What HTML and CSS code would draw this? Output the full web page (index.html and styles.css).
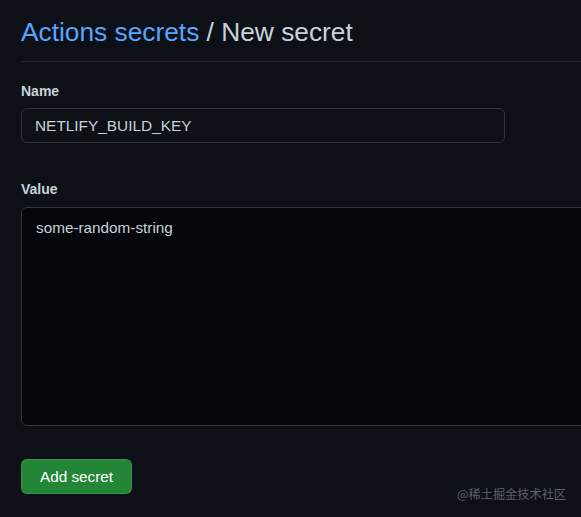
FILE: index.html
```html
<!DOCTYPE html>
<html lang="en">
<head>
<meta charset="utf-8">
<title>New secret</title>
<link rel="stylesheet" href="styles.css">
</head>
<body>
<main class="page">
  <header class="subhead">
    <h1 class="heading"><a class="crumb" href="#">Actions secrets</a> / New secret</h1>
  </header>
  <form class="form">
    <div class="group">
      <label class="label" for="name">Name</label>
      <input class="input" id="name" type="text" value="NETLIFY_BUILD_KEY">
    </div>
    <div class="group group-value">
      <label class="label" for="value">Value</label>
      <div class="clip">
        <textarea class="textarea" id="value">some-random-string</textarea>
      </div>
    </div>
    <button class="btn" type="button">Add secret</button>
  </form>
  <div class="watermark">@稀土掘金技术社区</div>
</main>
</body>
</html>
```

FILE: styles.css
```css
html, body {
  margin: 0;
  padding: 0;
  background: #0d1117;
  overflow: hidden;
}
body {
  width: 581px;
  height: 517px;
  font-family: "Liberation Sans", Arial, sans-serif;
  color: #c9d1d9;
}
.page {
  position: relative;
  width: 581px;
  height: 517px;
  padding-left: 21px;
  box-sizing: border-box;
  overflow: hidden;
}
.subhead {
  padding-top: 16px;
  padding-bottom: 13px;
  border-bottom: 1px solid #21262d;
}
.heading {
  margin: 0;
  font-size: 26.3px;
  line-height: 32px;
  font-weight: 400;
  color: #c9d1d9;
  white-space: nowrap;
}
.crumb {
  color: #58a6ff;
  text-decoration: none;
}
.form {
  display: flex;
  flex-direction: column;
  align-items: flex-start;
}
.group {
  display: flex;
  flex-direction: column;
  margin-top: 19px;
}
.group-value {
  margin-top: 36px;
  width: 560px;
}
.label {
  font-size: 14px;
  line-height: 21px;
  font-weight: 700;
  color: #c9d1d9;
  margin-bottom: 6px;
}
.group-value .label {
  margin-bottom: 7px;
}
.input {
  box-sizing: border-box;
  width: 484px;
  height: 35px;
  padding: 0 13px;
  margin: 0;
  font-family: "Liberation Sans", Arial, sans-serif;
  font-size: 15.4px;
  line-height: 33px;
  color: #c9d1d9;
  background: #0d1117;
  border: 1px solid #30363d;
  border-radius: 6px;
  outline: none;
}
.clip {
  width: 560px;
  height: 219px;
  overflow: hidden;
}
.textarea {
  display: block;
  box-sizing: border-box;
  width: 640px;
  height: 219px;
  padding: 8px 14px;
  margin: 0;
  font-family: "Liberation Sans", Arial, sans-serif;
  font-size: 15.3px;
  line-height: 23px;
  color: #c9d1d9;
  background: #03060b;
  border: 1px solid #30363d;
  border-radius: 6px;
  resize: none;
  outline: none;
}
.btn {
  margin-top: 33px;
  box-sizing: border-box;
  width: 111px;
  height: 35px;
  padding: 0;
  font-family: "Liberation Sans", Arial, sans-serif;
  font-size: 15.3px;
  color: #ffffff;
  background: #238636;
  border: 1px solid rgba(240, 246, 252, 0.1);
  border-radius: 6px;
}
.watermark {
  position: absolute;
  left: 457px;
  top: 486px;
  font-family: "Noto Sans CJK SC", sans-serif;
  font-size: 12.2px;
  line-height: 17px;
  color: #5c6167;
  white-space: nowrap;
}
```
